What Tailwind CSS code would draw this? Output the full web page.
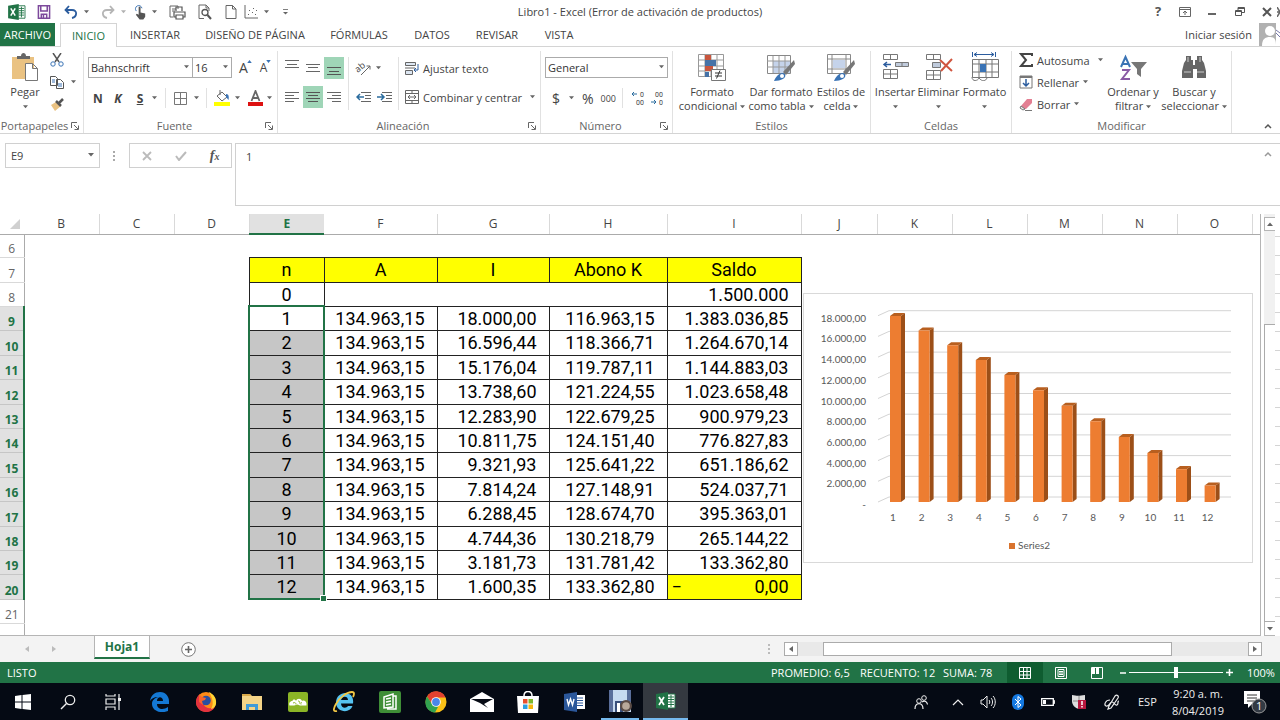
<!DOCTYPE html>
<html lang="es">

<head>
    <meta charset="UTF-8">
    <meta name="viewport" content="width=device-width, initial-scale=1.0">
    <title>Libro1 - Excel</title>
    <script src="https://cdn.jsdelivr.net/npm/@tailwindcss/browser@4"></script>
</head>

<body class="h-screen flex flex-col overflow-hidden bg-white text-[#444] text-[11px] leading-[15px] font-['Open_Sans','Noto_Sans',sans-serif]">

    <!-- Shared symbols -->
    <svg class="hidden">
        <symbol id="caret" viewBox="0 0 6 4"><path d="M0 0h6L3 3.5z" fill="#666" /></symbol>
        <symbol id="launcher" viewBox="0 0 8 8"><path d="M.5 6V.5H6M3 3l4 4M7.5 3.5v4h-4" fill="none" stroke="#666" /></symbol>
        <symbol id="excel" viewBox="0 0 20 18">
            <path d="M10 2h9v14h-9z" fill="#fff" stroke="#217346" />
            <path d="M12 5h6M12 7.500h6M12 10h6M12 12.500h6M15 3v12" stroke="#217346" />
            <path d="M0 2l12-2v18L0 16z" fill="#217346" />
            <path d="M3 5l5 8M8 5l-5 8" stroke="#fff" stroke-width="1.700" />
        </symbol>
    </svg>

    <!-- Title bar -->
    <header class="relative flex items-center h-[23px] shrink-0">
        <div class="flex items-center pl-2">
            <svg class="w-[18px] h-4 mr-[10px]" viewBox="0 0 20 18"><use href="#excel" /></svg>
            <button class="w-4 mr-3" aria-label="Guardar"><svg class="w-3.5 h-3.5 mx-auto" viewBox="0 0 12 13"><path d="M.8.800h10.400v11.400H.8zM3 1v4.500h6V1M3.500 12V8.500h5V12M5.500 9v3" fill="none" stroke="#7d4a9c" stroke-width="1.400" /></svg></button>
            <button class="flex items-center gap-1.5 mr-3" aria-label="Deshacer"><svg class="w-3.5 h-3.5" viewBox="0 0 14 14"><path d="M5 1L1.500 5 5 8.500M2 5h6c6 0 5 7 0 8" fill="none" stroke="#2b5c9e" stroke-width="1.800" /></svg><svg class="w-[5px] h-1"><use href="#caret" /></svg></button>
            <button class="flex items-center gap-1.5 mr-2" aria-label="Rehacer"><svg class="w-3.5 h-3.5" viewBox="0 0 14 14"><path d="M9 1l3.500 4L9 8.500M12 5H6c-6 0-5 7 0 8" fill="none" stroke="#b5b5b5" stroke-width="1.800" /></svg><svg class="w-[5px] h-1 opacity-50"><use href="#caret" /></svg></button>
            <button class="flex items-center gap-1 mr-3" aria-label="Modo táctil"><svg class="w-3.5 h-4" viewBox="0 0 15 16"><path d="M2.500 7a3.500 3.500 0 1 1 6-3" fill="none" stroke="#3a73b5" /><path d="M5 2.500h2v6l5 1.200V13l-2 3H6l-4-5 1-1 2 1z" fill="#555" /></svg><svg class="w-[5px] h-1"><use href="#caret" /></svg></button>
            <button class="mr-3" aria-label="Impresión rápida"><svg class="w-[17px] h-4" viewBox="0 0 17 16"><path d="M4 13H1V2h8v3M3 5h4M3 7h3" fill="none" stroke="#666" /><path d="M7 7V3h6v4M5 8h11v5h-2v-2H7v2H5zM7 11.500V15h7v-3.500" fill="none" stroke="#555" stroke-width="1.200" /></svg></button>
            <button class="mr-[13px]" aria-label="Vista previa"><svg class="w-3.5 h-4" viewBox="0 0 14 16"><path d="M6 14.500H1V1h7l3 3v3M8 1v3h3" fill="none" stroke="#666" /><circle cx="7" cy="8.500" r="3" fill="#fff" stroke="#555" stroke-width="1.300" /><path d="M9.500 11l3.500 4" stroke="#555" stroke-width="2" /></svg></button>
            <button class="mr-[7px]" aria-label="Nuevo"><svg class="w-3 h-3.5" viewBox="0 0 12 14"><path d="M1 .5h6.500L11 4v9.500H1zM7.500.5V4H11" fill="none" stroke="#666" /></svg></button>
            <button class="flex items-center gap-1.5 mr-[14px]" aria-label="Gráfico"><svg class="w-3.5 h-3.5" viewBox="0 0 14 14"><path d="M1 0v13h13" fill="none" stroke="#666" /><path d="M4 9h1v1H4zM5 5h1v1H5zM8 7h1v1H8zM9 3h1v1H9zM12 5h1v1h-1zM11 9h1v1h-1z" fill="#666" /></svg><svg class="w-[5px] h-1"><use href="#caret" /></svg></button>
            <button aria-label="Personalizar"><svg class="w-[5px] h-2" viewBox="0 0 6 8"><path d="M0 1h6" stroke="#666" /><path d="M0 4h6L3 7z" fill="#666" /></svg></button>
        </div>
        <h1 class="absolute inset-x-0 text-center pointer-events-none">Libro1 - Excel (Error de activación de productos)</h1>
        <div class="ml-auto flex items-center text-[#555]">
            <button class="w-5 text-[13px] font-bold" aria-label="Ayuda">?</button>
            <button class="w-5 ml-[7px]" aria-label="Opciones de la cinta"><svg class="w-3 h-2.5 mx-auto" viewBox="0 0 12 10"><path d="M.5.500h11v9H.5zM.5 2.500h11M6 8V4M4 6l2-2 2 2" fill="none" stroke="#666" /></svg></button>
            <button class="w-5 ml-[7px]" aria-label="Minimizar"><svg class="w-2.5 h-2.5 mx-auto" viewBox="0 0 10 10"><path d="M1 7h8" stroke="#555" stroke-width="1.800" /></svg></button>
            <button class="w-5 ml-2" aria-label="Restaurar"><svg class="w-2.5 h-2.5 mx-auto" viewBox="0 0 10 10"><path d="M.5 3.500h6v5h-6zM.5 4.500h6M3 3V.5h6.500v5H7M3 1.500h6" fill="none" stroke="#555" /></svg></button>
            <button class="w-5 ml-[7px]" aria-label="Cerrar"><svg class="w-2.5 h-2.5 mx-auto" viewBox="0 0 10 10"><path d="M1 1l8 8M9 1L1 9" stroke="#555" stroke-width="2" /></svg></button>
            <svg class="w-[3px] h-2.5" viewBox="0 0 3 10"><path d="M0 0l3 5-3 5M0 5h3" fill="none" stroke="#666" stroke-width="1.500" /></svg>
        </div>
    </header>

    <!-- Ribbon tabs -->
    <nav class="flex items-stretch h-6 shrink-0 border-b border-[#d4d4d4]">
        <button class="w-[55px] bg-[#217346] text-white">ARCHIVO</button>
        <button class="w-[57px] ml-[5px] -mb-px border border-b-0 border-[#d4d4d4] bg-white text-[#217346]">INICIO</button>
        <button class="w-[76px]">INSERTAR</button>
        <button class="w-[124px]">DISEÑO DE PÁGINA</button>
        <button class="w-[84px]">FÓRMULAS</button>
        <button class="w-[62px]">DATOS</button>
        <button class="w-[68px]">REVISAR</button>
        <button class="w-[56px]">VISTA</button>
        <a href="#" class="ml-auto self-center mr-[7px]">Iniciar sesión</a>
        <svg class="w-[21px] h-[23px]" viewBox="0 0 21 23"><path d="M0 0h17v23H0z" fill="#b1b1b1" /><circle cx="11" cy="8" r="5" fill="#fff" /><path d="M3 23c0-7 3-9 8-9s6 3 6 9z" fill="#fff" /><path d="M17 10l4 4M17 7l4 3" stroke="#77a" /></svg>
    </nav>

    <!-- Ribbon -->
    <div class="flex h-[87px] shrink-0 border-b border-[#d4d4d4]">
        <section class="w-[84px] pt-1 flex">
            <div class="flex-1 flex flex-col border-r border-[#e1e1e1]">
                <div class="flex flex-1 min-h-0">
                    <button class="flex flex-col items-center w-[50px]">
                        <svg class="w-7 h-[30px] mb-1" viewBox="0 0 28 30"><path d="M1 6h22v22H1z" fill="#eac282" /><path d="M6 8V5h4c0-4 5-4 5 0h4v3z" fill="#666" /><path d="M14.500 12.500h7l5 5v12h-12zM21.500 12.500v5h5" fill="#fff" stroke="#777" /></svg>
                        <span class="leading-[14px]">Pegar</span>
                        <svg class="w-[5px] h-1 mt-1.5"><use href="#caret" /></svg>
                    </button>
                    <div class="flex flex-col gap-2 pt-0.5">
                        <button aria-label="Cortar"><svg class="w-3.5 h-3.5" viewBox="0 0 14 14"><path d="M3 0l6 9M11 0L5 9" stroke="#555" stroke-width="1.500" /><circle cx="3" cy="11" r="2.200" fill="none" stroke="#3a73b5" /><circle cx="11" cy="11" r="2.200" fill="none" stroke="#3a73b5" /></svg></button>
                        <button class="flex items-center gap-[7px]" aria-label="Copiar"><svg class="w-3.5 h-3.5" viewBox="0 0 14 14"><path d="M.5 1.500h5l2 2v7h-7zM6.500 4.500h4l3 3v6h-7z" fill="#fff" stroke="#555" /><path d="M2 5h3M2 7h3M8 9h4M8 11h4" stroke="#3a73b5" /></svg><svg class="w-[5px] h-1"><use href="#caret" /></svg></button>
                        <button aria-label="Copiar formato"><svg class="w-3.5 h-3.5" viewBox="0 0 14 14"><path d="M1 8l5-3 5 4-6 5z" fill="#eac282" /><path d="M6 4l5 5M9 6l4-4" stroke="#555" stroke-width="2.500" /></svg></button>
                    </div>
                </div>
                <div class="relative text-center pr-[14px] text-[#666]">Portapapeles<button class="absolute right-1 top-1" aria-label="Más"><svg class="w-2 h-2"><use href="#launcher" /></svg></button></div>
            </div>
        </section>

        <section class="w-[194px] pt-1 flex">
            <div class="flex-1 flex flex-col border-r border-[#e1e1e1] pl-1">
                <div class="flex items-center pt-[6px] h-[27px]">
                    <label class="relative"><select aria-label="Fuente" class="appearance-none block w-[105px] h-[21px] pl-0.5 border border-[#ababab] text-[#333]"><option>Bahnschrift</option></select><svg class="absolute right-1 top-2 w-[5px] h-1"><use href="#caret" /></svg></label>
                    <label class="relative -ml-px"><select aria-label="Tamaño" class="appearance-none block w-[40px] h-[21px] pl-0.5 border border-[#ababab] text-[#333]"><option>16</option></select><svg class="absolute right-1 top-2 w-[5px] h-1"><use href="#caret" /></svg></label>
                    <button class="relative ml-[7px] text-[14px]" aria-label="Aumentar">A<svg class="absolute -right-1 top-0 w-[5px] h-[3px]" viewBox="0 0 6 4"><path d="M0 4h6L3 0z" fill="#3a73b5" /></svg></button>
                    <button class="relative ml-3 text-[12px]" aria-label="Disminuir">A<svg class="absolute -right-1 top-0 w-[5px] h-[3px]" viewBox="0 0 6 4"><path d="M0 0h6L3 4z" fill="#3a73b5" /></svg></button>
                </div>
                <div class="flex-1 flex items-center">
                    <button class="w-5 font-bold text-[12px]">N</button>
                    <button class="w-5 font-bold italic text-[12px]">K</button>
                    <button class="w-6 font-bold underline text-[12px]">S</button>
                    <svg class="w-[5px] h-1"><use href="#caret" /></svg>
                    <span class="w-px h-5 mx-2 bg-[#e1e1e1]"></span>
                    <button aria-label="Bordes"><svg class="w-[13px] h-[13px]" viewBox="0 0 13 13"><path d="M.5.500h12v12H.5zM6.500 0v13M0 6.500h13" fill="none" stroke="#777" /></svg></button>
                    <svg class="w-[5px] h-1 ml-[7px]"><use href="#caret" /></svg>
                    <span class="w-px h-5 mx-[7px] bg-[#e1e1e1]"></span>
                    <button aria-label="Relleno"><svg class="w-4 h-4" viewBox="0 0 16 16"><path d="M3 6l5-4 5 5-5 4zM6 5V0" fill="#fff" stroke="#666" /><path d="M12 4c3 0 3 3 2.500 6L12 7z" fill="#3a73b5" /><path d="M0 12h16v4H0z" fill="#ff0" /></svg></button>
                    <svg class="w-[5px] h-1 ml-[5px]"><use href="#caret" /></svg>
                    <button class="ml-2" aria-label="Color de fuente"><svg class="w-[15px] h-4" viewBox="0 0 15 16"><path d="M3.500 11L7.500 1l4 10M5 8h5" fill="none" stroke="#666" stroke-width="1.800" /><path d="M0 12h15v4H0z" fill="#d11" /></svg></button>
                    <svg class="w-[5px] h-1 ml-1"><use href="#caret" /></svg>
                </div>
                <div class="relative text-center pr-4 text-[#666]">Fuente<button class="absolute right-1 top-1" aria-label="Más"><svg class="w-2 h-2"><use href="#launcher" /></svg></button></div>
            </div>
        </section>

        <section class="w-[263px] pt-1 flex">
            <div class="flex-1 flex flex-col border-r border-[#e1e1e1] pl-1">
                <div class="flex flex-1 min-h-0 pt-[6px]">
                    <div class="grid grid-cols-3 gap-x-px gap-y-[7px] content-start">
                        <button class="w-5 h-[22px]" aria-label="Arriba"><svg class="w-5 h-[22px]" viewBox="0 0 20 22"><path d="M3 3.500h14M5 7.500h10M3 10.500h14" stroke="#666" /></svg></button>
                        <button class="w-5 h-[22px]" aria-label="Medio"><svg class="w-5 h-[22px]" viewBox="0 0 20 22"><path d="M3 7.500h14M5 10.500h10M3 14.500h14" stroke="#666" /></svg></button>
                        <button class="w-5 h-[22px] bg-[#9fd5b7]" aria-label="Abajo"><svg class="w-5 h-[22px]" viewBox="0 0 20 22"><path d="M3 10.500h14M5 14.500h10M3 17.500h14" stroke="#555" /></svg></button>
                        <button class="w-5 h-[22px]" aria-label="Izquierda"><svg class="w-5 h-[22px]" viewBox="0 0 20 22"><path d="M3 6.500h14M3 9.500h9M3 12.500h14M3 15.500h9" stroke="#666" /></svg></button>
                        <button class="w-5 h-[22px] bg-[#9fd5b7]" aria-label="Centro"><svg class="w-5 h-[22px]" viewBox="0 0 20 22"><path d="M3 6.500h14M5 9.500h10M3 12.500h14M5 15.500h10" stroke="#555" /></svg></button>
                        <button class="w-5 h-[22px]" aria-label="Derecha"><svg class="w-5 h-[22px]" viewBox="0 0 20 22"><path d="M3 6.500h14M8 9.500h9M3 12.500h14M8 15.500h9" stroke="#666" /></svg></button>
                    </div>
                    <div class="grid gap-y-[7px] content-start border-x border-[#e1e1e1] ml-1 mb-2 w-[51px] pl-[7px]">
                        <button class="flex items-center gap-1 h-[22px]" aria-label="Orientación"><svg class="w-4 h-4 overflow-visible" viewBox="0 0 16 16"><text x="0" y="10" font-size="9" fill="#444" transform="rotate(-40 5 9)">ab</text><path d="M5 15L14 6M14 9.500V6h-3.500" fill="none" stroke="#666" /></svg><svg class="w-[5px] h-1"><use href="#caret" /></svg></button>
                        <div class="flex items-center gap-[5px] h-[22px]">
                            <button aria-label="Disminuir sangría"><svg class="w-4 h-3" viewBox="0 0 16 12"><path d="M5 1.500h10M9 4.500h6M9 7.500h6M5 10.500h10" stroke="#666" /><path d="M8 6H1M4 3L1 6l3 3" fill="none" stroke="#2b6c9e" stroke-width="1.500" /></svg></button>
                            <button aria-label="Aumentar sangría"><svg class="w-4 h-3" viewBox="0 0 16 12"><path d="M5 1.500h10M9 4.500h6M9 7.500h6M5 10.500h10" stroke="#666" /><path d="M0 6h7M4 3l3 3-3 3" fill="none" stroke="#2b6c9e" stroke-width="1.500" /></svg></button>
                        </div>
                    </div>
                    <div class="grid gap-y-[7px] content-start pl-[6px]">
                        <button class="flex items-center gap-1 h-[22px]"><svg class="w-3.5 h-3.5" viewBox="0 0 14 14"><path d="M.5 1.500h10v3H.5zM.5 9.500h7v4h-7zM0 7h10" fill="#dce6f2" stroke="#666" /><path d="M13 3v6H9M11 7L9 9l2 2" fill="none" stroke="#2b5c9e" /></svg>Ajustar texto</button>
                        <button class="flex items-center gap-1 h-[22px] whitespace-nowrap"><svg class="w-3.5 h-3.5" viewBox="0 0 14 14"><path d="M.5.500h13v13H.5zM.5 3.500h13M.5 10.500h13M7 .5v3M7 10.500v3M3 7h8M5 5L3 7l2 2M9 5l2 2-2 2" fill="none" stroke="#666" /></svg>Combinar y centrar<svg class="w-[5px] h-1 ml-1"><use href="#caret" /></svg></button>
                    </div>
                </div>
                <div class="relative text-center pr-4 text-[#666]">Alineación<button class="absolute right-1 top-1" aria-label="Más"><svg class="w-2 h-2"><use href="#launcher" /></svg></button></div>
            </div>
        </section>

        <section class="w-[132px] pt-1 flex">
            <div class="flex-1 flex flex-col border-r border-[#e1e1e1] pl-1">
                <div class="pt-[6px] h-[27px]">
                    <label class="relative block w-[123px]"><select aria-label="Formato de número" class="appearance-none block w-full h-[21px] pl-0.5 border border-[#ababab] text-[#333]"><option>General</option></select><svg class="absolute right-1 top-2 w-[5px] h-1"><use href="#caret" /></svg></label>
                </div>
                <div class="flex-1 flex items-center">
                    <button class="w-[22px] text-[14px]">$</button>
                    <svg class="w-[5px] h-1 ml-0.5"><use href="#caret" /></svg>
                    <button class="ml-2 text-[14px]">%</button>
                    <button class="ml-[7px] text-[9px]">000</button>
                    <span class="w-px h-5 ml-[6px] mr-2 bg-[#e1e1e1]"></span>
                    <button aria-label="Aumentar decimales"><svg class="w-3.5 h-4 overflow-visible font-['Roboto',sans-serif]" viewBox="0 0 14 16"><path d="M6 4H1M3 2L1 4l2 2" fill="none" stroke="#2b6c9e" /><text x="9" y="7" font-size="7" fill="#444">0</text><text x="5" y="15" font-size="7" fill="#444">00</text></svg></button>
                    <button class="ml-[6px]" aria-label="Disminuir decimales"><svg class="w-3.5 h-4 overflow-visible font-['Roboto',sans-serif]" viewBox="0 0 14 16"><path d="M0 12h5M3 10l2 2-2 2" fill="none" stroke="#2b6c9e" /><text x="4" y="7" font-size="7" fill="#444">00</text><text x="8" y="15" font-size="7" fill="#444">0</text></svg></button>
                </div>
                <div class="relative text-center pr-4 text-[#666]">Número<button class="absolute right-1 top-1" aria-label="Más"><svg class="w-2 h-2"><use href="#launcher" /></svg></button></div>
            </div>
        </section>

        <section class="w-[198px] pt-1 flex">
            <div class="flex-1 flex flex-col border-r border-[#e1e1e1]">
                <div class="flex flex-1 min-h-0 pl-1">
                    <button class="flex flex-col items-center w-[70px]">
                        <svg class="w-7 h-[30px]" viewBox="0 0 28 30"><path d="M.5 3.500h25v22H.5zM7 3v23M13 3v23M19 3v23M0 9h25M0 15h25M0 20h25" fill="none" stroke="#999" /><path d="M7 4h6v5H7zM7 15h8v5H7z" fill="#c8553d" /><path d="M7 9h11v6H7zM7 21h4v5H7z" fill="#4572a7" /><path d="M13.500 18.500h14v11h-14z" fill="#fff" stroke="#777" /><path d="M17 22h7M17 25h7M22 19.500l-3.500 8" stroke="#333" /></svg>
                        <span class="mt-1 leading-[14px] whitespace-nowrap">Formato<br>condicional <svg class="inline w-[5px] h-1"><use href="#caret" /></svg></span>
                    </button>
                    <button class="flex flex-col items-center w-[68px]">
                        <svg class="w-7 h-[30px]" viewBox="0 0 28 30"><path d="M.5 4.500h23v18H.5z" fill="#fff" stroke="#888" /><path d="M6 10h17v12H6z" fill="#c5d3ea" /><path d="M6 5v17M12 5v17M18 5v17M0 10h23M0 16h23" stroke="#999" /><path d="M27 9L16 21l3 3 9-11z" fill="#777" /><path d="M7 30c2-5 7-10 11-7 2 4-4 7-11 7z" fill="#3a73b5" /><circle cx="15" cy="25" r="2" fill="#fff" /></svg>
                        <span class="mt-1 leading-[14px] whitespace-nowrap">Dar formato<br>como tabla <svg class="inline w-[5px] h-1"><use href="#caret" /></svg></span>
                    </button>
                    <button class="flex flex-col items-center w-[52px]">
                        <svg class="w-7 h-[30px]" viewBox="0 0 28 30"><path d="M.5 3.500h23v19H.5zM5 3v19M19 3v19M0 8h23M0 18h23" fill="none" stroke="#888" /><path d="M6 9h12v8H6z" fill="#c5d3ea" /><path d="M27 9L16 21l3 3 9-11z" fill="#777" /><path d="M7 30c2-5 7-10 11-7 2 4-4 7-11 7z" fill="#3a73b5" /><circle cx="15" cy="25" r="2" fill="#fff" /></svg>
                        <span class="mt-1 leading-[14px] whitespace-nowrap">Estilos de<br>celda <svg class="inline w-[5px] h-1"><use href="#caret" /></svg></span>
                    </button>
                </div>
                <div class="text-center text-[#666]">Estilos</div>
            </div>
        </section>

        <section class="w-[141px] pt-1 flex">
            <div class="flex-1 flex flex-col border-r border-[#e1e1e1]">
                <div class="flex flex-1 min-h-0 pl-0.5">
                    <button class="flex flex-col items-center w-[44px]">
                        <svg class="w-7 h-[30px] mb-1" viewBox="0 0 28 30"><path d="M2.500 3.500h14v5h-14zM9.500 3v5M2.500 18.500h14v9h-14zM9.500 18v10M2 23h15" fill="none" stroke="#777" /><path d="M14.500 11.500h13v4h-13zM21 11v5" fill="#c0cbdc" stroke="#777" /><path d="M10 13.500H4M6 11l-3 2.500L6 16" fill="none" stroke="#2b5c9e" stroke-width="1.500" /></svg>
                        <span class="leading-[14px]">Insertar</span>
                        <svg class="w-[5px] h-1 mt-1.5"><use href="#caret" /></svg>
                    </button>
                    <button class="flex flex-col items-center w-[43px]">
                        <svg class="w-7 h-[30px] mb-1" viewBox="0 0 28 30"><path d="M1.500 3.500h14v5h-14zM8.500 3v5M1.500 19.500h14v9h-14zM8.500 19v10M1 24h15" fill="none" stroke="#777" /><path d="M7.500 11.500h8v5h-8z" fill="#c0cbdc" stroke="#777" /><path d="M15 9l12 11M27 8L16 20" stroke="#d0553f" stroke-width="2" /></svg>
                        <span class="leading-[14px]">Eliminar</span>
                        <svg class="w-[5px] h-1 mt-1.5"><use href="#caret" /></svg>
                    </button>
                    <button class="flex flex-col items-center w-[49px]">
                        <svg class="w-7 h-[30px] mb-1" viewBox="0 0 28 30"><path d="M3 3.500h20M6 1.500L3 3.500l3 2M20 1.500l3 2-3 2M1.500 1v5M24.500 1v5" fill="none" stroke="#2b5c9e" /><path d="M1.500 8.500h26v18h-26zM8 8v18M15 8v18M21 8v18M1 13h26M1 21h26M1 26c0 5 6 4 7 1 3 4 7 3 8 0" fill="none" stroke="#777" /><path d="M9 13h6v8H9z" fill="#3a73b5" /></svg>
                        <span class="leading-[14px]">Formato</span>
                        <svg class="w-[5px] h-1 mt-1.5"><use href="#caret" /></svg>
                    </button>
                </div>
                <div class="text-center text-[#666]">Celdas</div>
            </div>
        </section>

        <section class="w-[220px] pt-1 flex">
            <div class="flex-1 flex flex-col border-r border-[#e1e1e1]">
                <div class="flex flex-1 min-h-0 pl-[7px]">
                    <div class="w-[84px] flex flex-col items-start gap-1">
                        <button class="flex items-center h-[18px] whitespace-nowrap"><svg class="w-3.5 h-3.5 mr-1" viewBox="0 0 14 14"><path d="M13 3V1H2l5 6-5 6h11v-2" fill="none" stroke="#444" stroke-width="2" /></svg>Autosuma<svg class="w-[5px] h-1 ml-2"><use href="#caret" /></svg></button>
                        <button class="flex items-center h-[18px] whitespace-nowrap"><svg class="w-3.5 h-3.5 mr-1" viewBox="0 0 14 14"><path d="M1 1h12v12H1z" fill="#fff" stroke="#777" /><path d="M1 1h12v2H1z" fill="#777" /><path d="M7 4v7M4 8l3 3 3-3" fill="none" stroke="#2b5c9e" stroke-width="1.500" /></svg>Rellenar<svg class="w-[5px] h-1 ml-1"><use href="#caret" /></svg></button>
                        <button class="flex items-center h-[18px] whitespace-nowrap"><svg class="w-3.5 h-3.5 mr-1" viewBox="0 0 14 14"><path d="M2 9l6-7h5v4l-6 6H4z" fill="#e37f93" /><path d="M2 9l4 3-2 1-3-2zM6 13.500h7" fill="#eee" stroke="#777" /></svg>Borrar<svg class="w-[5px] h-1 ml-1"><use href="#caret" /></svg></button>
                    </div>
                    <button class="flex flex-col items-center w-[60px]">
                        <svg class="w-7 h-[30px]" viewBox="0 0 28 30"><path d="M2 16L6.500 6 11 16M3.500 13h6" fill="none" stroke="#3a73b5" stroke-width="2" /><path d="M3 19h7L3 28h8" fill="none" stroke="#8a5ba5" stroke-width="2" /><path d="M12 11h16l-6 7v8l-4-3v-5z" fill="#777" /></svg>
                        <span class="mt-1 leading-[14px] whitespace-nowrap">Ordenar y<br>filtrar <svg class="inline w-[5px] h-1"><use href="#caret" /></svg></span>
                    </button>
                    <button class="flex flex-col items-center w-[62px]">
                        <svg class="w-7 h-[30px]" viewBox="0 0 28 30"><path d="M6 5h5v4h2v5h2V9h2V5h5v4l2 3 2 8v7h-9v-9h-4v9H2v-7l2-8 2-3z" fill="#666" /><path d="M4 21h7M17 21h7M8 6v5M20 6v5" stroke="#ccc" /></svg>
                        <span class="mt-1 leading-[14px] whitespace-nowrap">Buscar y<br>seleccionar <svg class="inline w-[5px] h-1"><use href="#caret" /></svg></span>
                    </button>
                </div>
                <div class="text-center text-[#666]">Modificar</div>
            </div>
        </section>
        <button class="ml-auto self-end mr-2 mb-1" aria-label="Contraer la cinta"><svg class="w-2 h-1.5" viewBox="0 0 8 6"><path d="M1 5l3-3 3 3" fill="none" stroke="#555" stroke-width="1.500" /></svg></button>
    </div>

    <!-- Formula bar -->
    <div class="flex items-start h-[80px] shrink-0 pt-[9px] pl-[5px]">
        <label class="relative"><input aria-label="Cuadro de nombres" value="E9" class="block w-[95px] h-[25px] pl-[5px] border border-[#d0d0d0]"><svg class="absolute right-1.5 top-[10px] w-1.5 h-1"><use href="#caret" /></svg></label>
        <svg class="w-0.5 h-2.5 mt-2 ml-[13px] mr-[14px]" viewBox="0 0 2 10"><path d="M0 0h2v2H0zM0 4h2v2H0zM0 8h2v2H0z" fill="#aaa" /></svg>
        <div class="flex items-center justify-around w-[103px] h-[25px] border border-[#d0d0d0] text-[#555]">
            <button aria-label="Cancelar"><svg class="w-2.5 h-2.5" viewBox="0 0 10 10"><path d="M1 1l8 8M9 1L1 9" stroke="#bbb" stroke-width="1.800" /></svg></button>
            <button aria-label="Introducir"><svg class="w-3 h-2.5" viewBox="0 0 12 10"><path d="M1 5l3 4 7-8" fill="none" stroke="#bbb" stroke-width="2" /></svg></button>
            <button class="font-['Liberation_Serif',serif] italic font-bold text-[14px]">f<span class="text-[10px]">x</span></button>
        </div>
        <input aria-label="Barra de fórmulas" value="1" class="flex-1 min-w-0 h-[63px] ml-[3px] pl-[10px] pb-[36px] border border-r-0 border-[#d0d0d0]">
        <svg class="absolute right-2 w-2 h-1.5 mt-2" viewBox="0 0 8 6"><path d="M1 5l3-3 3 3" fill="none" stroke="#999" stroke-width="1.500" /></svg>
    </div>

    <!-- Worksheet -->
    <main class="flex flex-1 min-h-0">
        <div class="relative flex-1 overflow-hidden border-r border-b border-[#b5b5b5]">
            <table class="table-fixed border-collapse w-full text-[12px]">
                <colgroup>
                    <col class="w-[24px]"><col class="w-[75px]"><col class="w-[75px]"><col class="w-[75px]"><col class="w-[75px]"><col class="w-[113px]"><col class="w-[112px]"><col class="w-[118px]"><col class="w-[134px]"><col class="w-[76px]"><col class="w-[75px]"><col class="w-[75px]"><col class="w-[75px]"><col class="w-[75px]"><col class="w-[75px]"><col>
                </colgroup>
                <thead>
                    <tr id="columns" class="h-5"></tr>
                </thead>
                <tbody id="rows"></tbody>
            </table>

            <!-- Selected range E9:E20 -->
            <div class="absolute left-[248px] top-[91px] w-[77px] h-[295px] border-2 border-[#217346] pointer-events-none">
                <span class="absolute -right-[3px] -bottom-[3px] w-[5px] h-[5px] bg-[#217346] outline outline-white"></span>
            </div>

            <!-- Chart -->
            <div class="absolute left-[803px] top-[79px] w-[450px] h-[270px] bg-white border border-[#d9d9d9]">
                <svg id="chart" class="w-full h-full font-['Lato',sans-serif] text-[10px]" viewBox="0 0 448 268"></svg>
            </div>
        </div>

        <!-- Vertical scroll bar -->
        <div class="flex flex-col w-[11px] ml-[3px] pt-[3px] bg-[#f1f1f1]">
            <button class="flex items-center justify-center h-3.5 border border-r-0 border-[#b5b5b5] bg-white" aria-label="Subir"><svg class="w-1.5 h-1 rotate-180"><use href="#caret" /></svg></button>
            <div class="flex-1"></div>
            <div class="h-[298px] border border-r-0 border-[#ababab] bg-white"></div>
            <button class="flex items-center justify-center h-3.5 border border-r-0 border-t-0 border-[#b5b5b5] bg-white" aria-label="Bajar"><svg class="w-1.5 h-1"><use href="#caret" /></svg></button>
        </div>
        <div id="edge" class="w-[5px] pt-1 overflow-hidden"></div>
    </main>

    <!-- Sheet tabs -->
    <div class="flex items-center h-[26px] shrink-0 bg-[#f3f3f3]">
        <button class="ml-[25px]" aria-label="Anterior"><svg class="w-1 h-1.5" viewBox="0 0 4 6"><path d="M4 0v6L0 3z" fill="#bbb" /></svg></button>
        <button class="ml-[23px]" aria-label="Siguiente"><svg class="w-1 h-1.5" viewBox="0 0 4 6"><path d="M0 0v6l4-3z" fill="#bbb" /></svg></button>
        <button class="self-start w-[56px] h-[23px] ml-[38px] bg-white border-x border-[#b5b5b5] border-b-2 border-b-[#217346] font-bold text-[12px] text-[#217346]">Hoja1</button>
        <button class="ml-[31px]" aria-label="Hoja nueva"><svg class="w-[15px] h-[15px]" viewBox="0 0 15 15"><circle cx="7.500" cy="7.500" r="6.800" fill="#fff" stroke="#777" /><path d="M7.500 4v7M4 7.500h7" stroke="#666" stroke-width="1.600" /></svg></button>
        <svg class="w-0.5 h-2.5 ml-auto mr-[14px]" viewBox="0 0 2 10"><path d="M0 0h2v2H0zM0 4h2v2H0zM0 8h2v2H0z" fill="#bbb" /></svg>
        <div class="flex items-center w-[478px] h-3.5 mr-[18px] bg-[#e9e9e9]">
            <button class="flex items-center justify-center w-3.5 h-3.5 border border-[#ababab] bg-white" aria-label="Desplazar a la izquierda"><svg class="w-1 h-1.5" viewBox="0 0 4 6"><path d="M4 0v6L0 3z" fill="#666" /></svg></button>
            <div class="w-[349px] h-3.5 ml-[25px] border border-[#ababab] bg-white"></div>
            <button class="flex items-center justify-center w-3.5 h-3.5 ml-auto border border-[#ababab] bg-white" aria-label="Desplazar a la derecha"><svg class="w-1 h-1.5" viewBox="0 0 4 6"><path d="M0 0v6l4-3z" fill="#666" /></svg></button>
        </div>
    </div>

    <!-- Status bar -->
    <footer class="flex items-center h-[21px] shrink-0 bg-[#217346] pl-[7px] pr-[5px] text-white">
        <span>LISTO</span>
        <span class="ml-auto w-[89px]">PROMEDIO: 6,5</span>
        <span class="w-[83px]">RECUENTO: 12</span>
        <span class="w-[64px]">SUMA: 78</span>
        <button class="w-9 h-full bg-[#0f5c30]" aria-label="Normal"><svg class="w-3 h-3 mx-auto" viewBox="0 0 12 12"><path d="M.5.500h11v11H.5zM4.500 0v12M8 0v12M0 4.500h12M0 8h12" fill="none" stroke="#fff" /></svg></button>
        <button class="w-9" aria-label="Diseño de página"><svg class="w-3 h-3 mx-auto" viewBox="0 0 12 12"><path d="M.5.500h11v11H.5zM3 2.500h6v7H3zM4 4.500h4M4 6h4M4 7.500h4" fill="none" stroke="#fff" /></svg></button>
        <button class="w-9" aria-label="Salto de página"><svg class="w-3 h-3 mx-auto" viewBox="0 0 12 12"><path d="M.5.500h11v11H.5z" fill="none" stroke="#fff" /><path d="M1 1h3v6H1zM5 1h3v6H5z" fill="#fff" /></svg></button>
        <button class="w-3 ml-0.5" aria-label="Alejar"><svg class="w-1.5 h-1.5 mx-auto" viewBox="0 0 6 6"><path d="M0 3h6" stroke="#fff" stroke-width="1.500" /></svg></button>
        <input type="range" aria-label="Zoom" class="appearance-none w-[94px] h-px bg-white [&::-webkit-slider-thumb]:appearance-none [&::-webkit-slider-thumb]:w-1 [&::-webkit-slider-thumb]:h-[11px] [&::-webkit-slider-thumb]:bg-white">
        <button class="w-3" aria-label="Acercar"><svg class="w-[7px] h-[7px] mx-auto" viewBox="0 0 8 8"><path d="M0 4h8M4 0v8" stroke="#fff" stroke-width="1.800" /></svg></button>
        <span class="w-[28px] ml-3">100%</span>
    </footer>

    <!-- Taskbar -->
    <div class="flex items-stretch h-[37px] shrink-0 bg-[#050a14] text-[#eee]">
        <button class="w-[45px]" aria-label="Inicio"><svg class="w-4 h-4 mx-auto" viewBox="0 0 16 16"><path d="M0 2l6.500-1v6.500H0zM7.500.9L16 0v7.500H7.500zM0 8.500h6.500V15L0 14zM7.500 8.500H16V16l-8.500-1z" fill="#fff" /></svg></button>
        <button class="w-[46px]" aria-label="Buscar"><svg class="w-4 h-4 mx-auto" viewBox="0 0 16 16"><circle cx="10" cy="6" r="4.700" fill="none" stroke="#eee" stroke-width="1.300" /><path d="M6.500 9.500L1 15" stroke="#eee" stroke-width="1.400" /></svg></button>
        <button class="w-[44px]" aria-label="Vista de tareas"><svg class="w-4 h-4 mx-auto" viewBox="0 0 16 16"><path d="M1 0v2h9V0M1 5h9v5H1zM1 16v-3h9v3M14 0v16" fill="none" stroke="#eee" stroke-width="1.200" /><path d="M13 4h3v3h-3z" fill="#eee" /></svg></button>
        <button class="w-[48px]" aria-label="Edge"><svg class="w-5 h-5 mx-auto" viewBox="0 0 20 20"><path d="M1 9C2 3 6 0 11 0c6 0 9 5 9 9v3H8c0 6 7 6 11 3v4c-7 3-16 0-16-7 0-4 3-6 6-7-4 0-7 2-8 4zm7 0h6c0-5-6-5-6 0z" fill="#1478d4" /></svg></button>
        <button class="w-[46px]" aria-label="Firefox"><svg class="w-[22px] h-[22px] mx-auto" viewBox="0 0 22 22"><circle cx="11" cy="11" r="10" fill="#ff8a16" /><path d="M1 11c0 6 5 10 10 10 4 0 8-2 9-6-3 3-9 3-11-1L4 4C2 6 1 8 1 11z" fill="#e3313f" /><path d="M14 1c4 2 8 6 7 12-1 4-4 5-5 5 3-5 2-10-2-17z" fill="#ffd535" /><circle cx="11" cy="9.500" r="4.800" fill="#2a4fa0" /><path d="M4 3l3 3 4 1-1 2-3 1 1 4-4-3z" fill="#f9632b" /></svg></button>
        <button class="w-[46px]" aria-label="Explorador de archivos"><svg class="w-[22px] h-5 mx-auto" viewBox="0 0 22 20"><path d="M1 2h8l2 2h10v14H1z" fill="#f4d488" /><path d="M1 2h8l1 2H1z" fill="#d9a94a" /><path d="M5 18v-6h12v6h-3v-3H8v3z" fill="#3f9bd8" /></svg></button>
        <button class="w-[46px]" aria-label="Nube"><svg class="w-5 h-5 mx-auto" viewBox="0 0 20 20"><rect width="20" height="20" rx="2" fill="#8bb526" /><path d="M1.500 13.500c-1-3 1-4.500 3-4.500 0-2 3-2 3.500 0C9 6 13 6 14 9c3-1.500 5 1 4.500 4.500H12c-1 0-1.500-1-2.500-1s-2 1-3.500 1z" fill="#fff" /><path d="M5 11c2-1 3 0 3 1.500M10 9c2 0 2.500 2 1 2.500M14 10.500c-1 0-1.500 1-1 2" fill="none" stroke="#8bb526" /></svg></button>
        <button class="w-[46px]" aria-label="Internet Explorer"><svg class="w-[22px] h-[22px] mx-auto" viewBox="0 0 22 22"><path d="M8 12.500h12C22-2 3-1 3 11.500c0 10 14 11.500 16.500 3.500H15c-2 3-7 2-7-2.500zm0-3.500c1-4.500 7-4.500 7 0z" fill="#55c3f1" /><path d="M4 20c-4 1-4-2-1-7C7 6 14 1 19 1c3 0 2 3 1 5" fill="none" stroke="#f3c845" stroke-width="1.800" /></svg></button>
        <button class="w-[46px]" aria-label="Documentos"><svg class="w-[22px] h-[22px] mx-auto" viewBox="0 0 22 22"><rect width="22" height="22" rx="2" fill="#3f8e37" /><path d="M5 6l9-3v13l-9 1zM14 5h3v13H8" fill="none" stroke="#fff" stroke-width="1.500" /><path d="M7 8l5-1M7 11l5-1M7 14l5-1" stroke="#fff" stroke-width="1.300" /></svg></button>
        <button class="w-[46px]" aria-label="Chrome"><svg class="w-[22px] h-[22px] mx-auto" viewBox="0 0 22 22"><circle cx="11" cy="11" r="10.500" fill="#fbc116" /><path d="M2 5.500C6-1.500 17-1.500 20.500 6.500H11L7 13z" fill="#e2412f" /><path d="M2 5.500L7 13l6 3-3 5.500C2 21-2 13 2 5.500z" fill="#32a350" /><circle cx="11" cy="11" r="4.800" fill="#fff" /><circle cx="11" cy="11" r="3.900" fill="#4a86ea" /></svg></button>
        <button class="w-[46px]" aria-label="Correo"><svg class="w-6 h-5 mx-auto" viewBox="0 0 24 20"><path d="M0 7l12-7 12 7v13H0z" fill="#fff" /><path d="M1 7h22l-9 5 4 4L10 11z" fill="#050a14" /></svg></button>
        <button class="w-[46px]" aria-label="Microsoft Store"><svg class="w-[22px] h-[22px] mx-auto" viewBox="0 0 22 22"><path d="M7 5c0-6 8-6 8 0" fill="none" stroke="#fff" stroke-width="1.500" /><path d="M0 5h22l-1 17H1z" fill="#fff" /><path d="M6 8h4.500v4.500H6z" fill="#e8502c" /><path d="M11.500 8H16v4.500h-4.500z" fill="#7cb82a" /><path d="M6 13.500h4.500V18H6z" fill="#2c9fe0" /><path d="M11.500 13.500H16V18h-4.500z" fill="#f7b70d" /></svg></button>
        <button class="w-[46px]" aria-label="Word"><svg class="w-[21px] h-5 mx-auto" viewBox="0 0 21 20"><path d="M10 3h11v14H10z" fill="#fff" /><path d="M13 6h6M13 8.500h6M13 11h6M13 13.500h6" stroke="#2b579a" /><path d="M0 2l13-2v20L0 18z" fill="#2b579a" /><path d="M3 7l1.500 6 2-6 2 6L10 7" fill="none" stroke="#fff" stroke-width="1.400" /></svg></button>
        <button class="w-[38px] ml-1 border-b-2 border-[#76b9ed]" aria-label="Grabador"><svg class="w-6 h-6 mx-auto" viewBox="0 0 24 24"><path d="M1 1h22v22H1z" fill="#c7daf0" /><path d="M1 1h4v22H1zM19 1h4v12h-4z" fill="#5a6e9b" /><path d="M7 12h8v11H7z" fill="#394f7b" /><path d="M9 14h3v9H9z" fill="#fff" /><circle cx="18" cy="17" r="6" fill="#594a44" /><circle cx="18" cy="17" r="3.800" fill="#b8a89a" /></svg></button>
        <button class="w-[45px] ml-1 border-b-2 border-[#76b9ed] bg-[#343940]" aria-label="Excel"><svg class="w-5 h-[18px] mx-auto"><use href="#excel" /></svg></button>

        <div class="flex items-center ml-auto">
            <svg class="w-3.5 h-3.5" viewBox="0 0 14 14"><circle cx="5" cy="6" r="2.300" fill="none" stroke="#eee" /><circle cx="10" cy="3" r="2.300" fill="none" stroke="#eee" /><path d="M1 14c0-7 8-7 8 0M8 7c3-2 5 0 5.500 2.500" fill="none" stroke="#eee" stroke-width="1.200" /></svg>
            <svg class="w-3 h-2 ml-[24px]" viewBox="0 0 12 8"><path d="M1 7l5-5 5 5" fill="none" stroke="#eee" stroke-width="1.200" /></svg>
            <svg class="w-4 h-3.5 ml-4" viewBox="0 0 16 14"><path d="M1 5h2l4-4v12L3 9H1zM9 5c1 1 1 3 0 4M11 3c2 2 2 6 0 8M13 1c3 3 3 9 0 12" fill="none" stroke="#eee" /></svg>
            <svg class="w-3 h-4 ml-4" viewBox="0 0 12 16"><rect width="12" height="16" rx="6" fill="#1478e0" /><path d="M3 5l6 6-3 2.500v-11L9 5l-6 6" fill="none" stroke="#fff" /></svg>
            <svg class="w-3.5 h-2.5 ml-[17px]" viewBox="0 0 14 10"><path d="M.7 1.700h11.600v6.600H.7zM12 4h2v2h-2" fill="none" stroke="#fff" stroke-width="1.300" /><path d="M2 3h3v4H2z" fill="#fff" /></svg>
            <svg class="w-4 h-4 ml-4" viewBox="0 0 16 16"><path d="M1 1c5 1 7 1 13 0v8c-1 3-3 5-6 6-4-1-7-4-7-8z" fill="#ddd" /><path d="M8 2v12M2 7h10" stroke="#888" /><path d="M7 6h8v9H7z" fill="#b8173e" /><path d="M11 7v4M11 12v1.500" stroke="#fff" stroke-width="1.500" /></svg>
            <svg class="w-4 h-4 ml-[17px]" viewBox="0 0 16 16"><path d="M5 12l6-10c2-2 4 0 3 2L7 14l-3 1zM6 6c-5 0-6 5-4 6 4 1 3-4 6-4 2 0 3 4 5 3s0-4 2-4" fill="none" stroke="#eee" stroke-width="1.200" /></svg>
            <span class="w-[30px] ml-[18px]">ESP</span>
            <div class="w-[60px] text-center leading-[17px]">9:20 a. m.<br>8/04/2019</div>
            <button class="ml-[15px] mr-[13px]" aria-label="Notificaciones"><svg class="w-6 h-6" viewBox="0 0 24 24"><path d="M1 1h16v13H9l-4 4v-4H1z" fill="#fff" /><path d="M4 5h10M4 8h10M4 11h7" stroke="#333" /><circle cx="16" cy="16" r="7" fill="#333a44" stroke="#999" /><text x="13" y="20" font-size="11" fill="#fff">1</text></svg></button>
        </div>
    </div>

    <script>
        const columns = ['B', 'C', 'D', 'E', 'F', 'G', 'H', 'I', 'J', 'K', 'L', 'M', 'N', 'O'];

        // n, A, I, Abono K, Saldo
        const loan = [
            ['1', '134.963,15', '18.000,00', '116.963,15', '1.383.036,85'],
            ['2', '134.963,15', '16.596,44', '118.366,71', '1.264.670,14'],
            ['3', '134.963,15', '15.176,04', '119.787,11', '1.144.883,03'],
            ['4', '134.963,15', '13.738,60', '121.224,55', '1.023.658,48'],
            ['5', '134.963,15', '12.283,90', '122.679,25', '900.979,23'],
            ['6', '134.963,15', '10.811,75', '124.151,40', '776.827,83'],
            ['7', '134.963,15', '9.321,93', '125.641,22', '651.186,62'],
            ['8', '134.963,15', '7.814,24', '127.148,91', '524.037,71'],
            ['9', '134.963,15', '6.288,45', '128.674,70', '395.363,01'],
            ['10', '134.963,15', '4.744,36', '130.218,79', '265.144,22'],
            ['11', '134.963,15', '3.181,73', '131.781,42', '133.362,80'],
            ['12', '134.963,15', '1.600,35', '133.362,80', '0,00']
        ];

        const cell = "border border-[#222] p-0 pt-px text-black text-[18px] leading-[20px] font-['Roboto',sans-serif]";

        // Column headers
        document.getElementById('columns').innerHTML =
            '<th class="p-0 border-b border-[#ababab]"><svg class="w-2.5 h-2.5 ml-auto mr-1" viewBox="0 0 10 10"><path d="M10 0v10H0z" fill="#d0d0d0" /></svg></th>' +
            columns.map(name => name === 'E'
                ? '<th class="p-0 bg-[#e1e1e1] border-b-2 border-[#217346] text-[#217346]">E</th>'
                : `<th class="p-0 font-normal border-r border-r-[#d9d9d9] border-b border-b-[#ababab]">${name}</th>`
            ).join('') +
            '<th class="p-0 border-b border-[#ababab]"></th>';

        function rowHeader(number) {
            if (number >= 9 && number <= 20) {
                return `<th class="p-0 align-bottom leading-[16px] bg-[#e1e1e1] text-[#217346] border-b border-b-[#c6c6c6] border-r-2 border-r-[#217346]">${number}</th>`;
            }
            return `<th class="p-0 align-bottom leading-[16px] font-normal text-[#666] border-b border-b-[#d9d9d9] border-r border-r-[#ababab]">${number}</th>`;
        }

        function rowCells(number) {
            if (number === 7) {
                return ['n', 'A', 'I', 'Abono K', 'Saldo'].map(text => `<td class="${cell} text-center bg-[#ffff00]">${text}</td>`).join('');
            }
            if (number === 8) {
                return `<td class="${cell} text-center">0</td><td colspan="3" class="${cell}"></td><td class="${cell} text-right pr-3">1.500.000</td>`;
            }
            if (number >= 9 && number <= 20) {
                const [n, ...values] = loan[number - 9];
                const first = `<td class="${cell} text-center ${number > 9 ? 'bg-[#c6c6c6]' : ''}">${n}</td>`;
                return first + values.map((value, i) => number === 20 && i === 3
                    ? `<td class="${cell} bg-[#ffff00]"><div class="flex justify-between pl-1 pr-3"><span>−</span><span>${value}</span></div></td>`
                    : `<td class="${cell} text-right pr-3">${value}</td>`
                ).join('');
            }
            return '<td colspan="5"></td>';
        }

        // Row 6 is partly scrolled away, the rest are 24 or 25 pixels high
        function rowHeight(number) {
            if (number === 6) return 'h-[23px]';
            return number % 5 === 2 || number % 5 === 0 ? 'h-[25px]' : 'h-[24px]';
        }

        let rows = '';
        for (let number = 6; number <= 22; number++) {
            rows += `<tr class="${rowHeight(number)}">${rowHeader(number)}<td colspan="3"></td>${rowCells(number)}<td colspan="7"></td></tr>`;
        }
        document.getElementById('rows').innerHTML = rows;

        // Chart: one 3D column per payment, taken from the interest column
        const base = 208;
        let chart = '';
        for (let i = 0; i <= 9; i++) {
            const y = base - i * 20.7;
            const text = i === 0 ? '-' : (i * 2) + '.000,00';
            chart += `<path d="M74 ${y}l11-5h342" fill="none" stroke="#d4d4d4" />`;
            chart += `<text x="62" y="${y + 6}" text-anchor="end" fill="#595959">${text}</text>`;
        }
        loan.forEach((row, i) => {
            const value = parseFloat(row[2].replace('.', '').replace(',', '.'));
            const x = 86 + i * 28.6;
            const height = value / 18000 * 186;
            const top = base - height;
            chart += `<path d="M${x} ${top}l4-3h11l-4 3z" fill="#b85f1f" />`;
            chart += `<path d="M${x + 11} ${top}l4-3v${height}l-4 3z" fill="#9c4f18" />`;
            chart += `<path d="M${x} ${top}h11v${height}h-11z" fill="#ed7d31" />`;
            chart += `<text x="${x + 3}" y="227" text-anchor="middle" fill="#595959">${i + 1}</text>`;
        });
        chart += '<path d="M205 249h6v6h-6z" fill="#d9732d" /><text x="214" y="255" fill="#595959">Series2</text>';
        document.getElementById('chart').innerHTML = chart;

        // Cut-off ruling on the right edge
        document.getElementById('edge').innerHTML = '<div class="h-[19px] border-b border-[#d4d4d4]"></div>'.repeat(21);
    </script>

</body>

</html>
